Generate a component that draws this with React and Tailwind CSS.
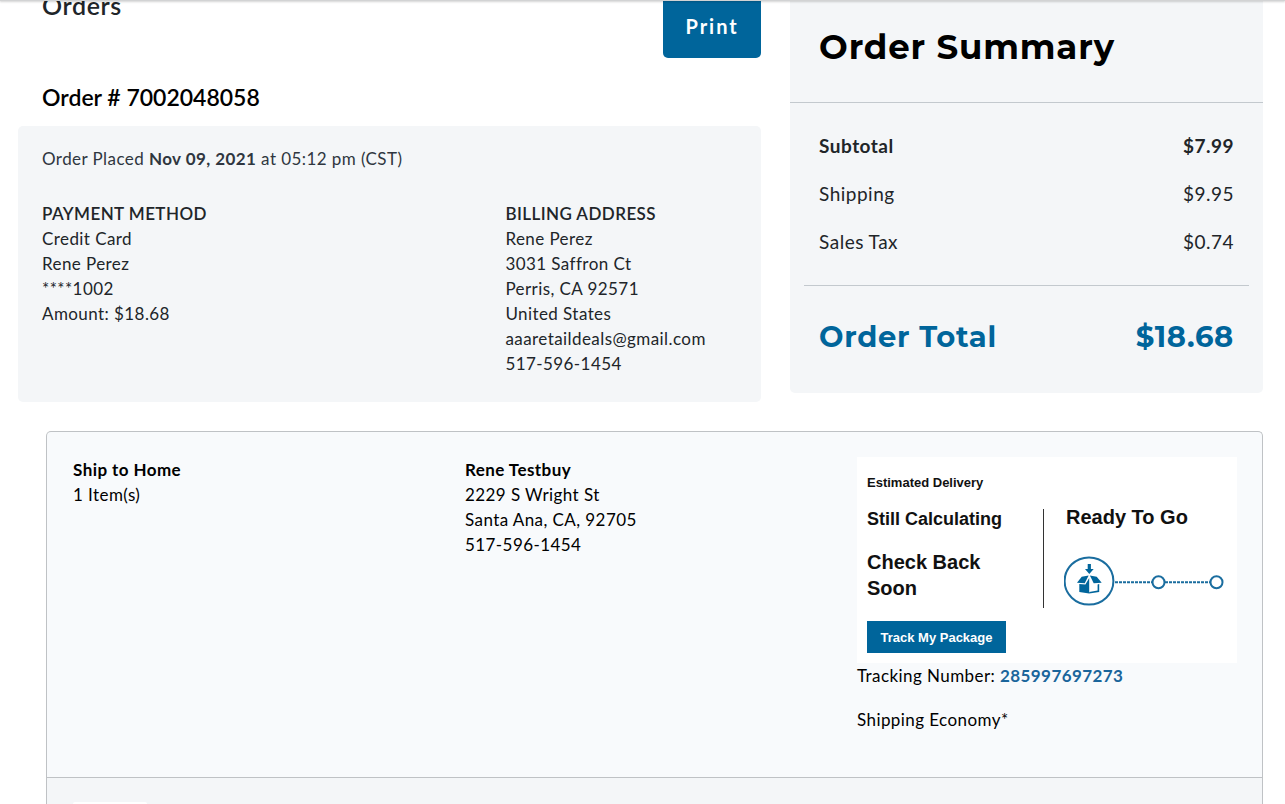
const paymentLines = ['Credit Card', 'Rene Perez', '****1002', 'Amount: $18.68'];

const billingLines = [
  'Rene Perez',
  '3031 Saffron Ct',
  'Perris, CA 92571',
  'United States',
  'aaaretaildeals@gmail.com',
  '517-596-1454',
];

const summaryRows = [
  { label: 'Subtotal', value: '$7.99', strong: true },
  { label: 'Shipping', value: '$9.95' },
  { label: 'Sales Tax', value: '$0.74' },
];

function DetailBlock({ title, lines, className = '' }) {
  return (
    <div className={className}>
      <h3 className="font-semibold">{title}</h3>
      {lines.map((line) => (
        <p key={line}>{line}</p>
      ))}
    </div>
  );
}

function OrderDetails() {
  return (
    <section>
      <div className="flex h-[58px] items-start justify-between pl-6">
        <h1 className="text-[25px]/[10px] font-semibold tracking-wide text-[#212529]">Orders</h1>
        <button
          type="button"
          className="h-full w-[98px] rounded-b-[5px] bg-[#00659b] pb-[6px] text-xl font-bold tracking-widest text-white"
        >
          Print
        </button>
      </div>

      <h2 className="mt-[23px] pl-6 text-[23px]/[32px] font-semibold text-black">Order # 7002048058</h2>

      <div className="mt-[13px] h-[276px] rounded-[5px] bg-[#f4f6f8] px-6 py-5 text-[17px]/[25px] tracking-wide text-[#212529]">
        <p className="text-[#2f3640]">
          Order Placed <b>Nov 09, 2021</b> at 05:12 pm (CST)
        </p>
        <div className="mt-[30px] grid grid-cols-3">
          <DetailBlock title="PAYMENT METHOD" lines={paymentLines} className="col-span-2" />
          <DetailBlock title="BILLING ADDRESS" lines={billingLines} />
        </div>
      </div>
    </section>
  );
}

function OrderSummary() {
  return (
    <section className="self-start rounded-b-[5px] bg-[#f4f6f8]">
      <div className="flex h-[103px] items-center border-b border-[#c3c9ce] px-[29px] pb-2">
        <h2 className="font-[Montserrat,Inter,sans-serif] text-[34px] font-bold tracking-wide text-black">
          Order Summary
        </h2>
      </div>
      <div className="mx-[14px] border-b border-[#c3c9ce] px-[15px] pt-[19px] pb-[19px]">
        {summaryRows.map((row) => (
          <div
            key={row.label}
            className={`flex h-12 items-center justify-between text-[19px] tracking-wide text-[#212529] ${row.strong ? 'font-bold' : ''}`}
          >
            <span>{row.label}</span>
            <span>{row.value}</span>
          </div>
        ))}
      </div>
      <div className="flex h-[107px] items-center justify-between px-[29px] pb-[6px] font-[Montserrat,Inter,sans-serif] text-[29px] font-bold tracking-wide text-[#00659b]">
        <span>Order Total</span>
        <span>$18.68</span>
      </div>
    </section>
  );
}

function ProgressTrack() {
  return (
    <svg width="160" height="50" viewBox="0 0 160 50" fill="none" stroke="#1a6d9f" aria-hidden="true">
      <ellipse cx="25" cy="25" rx="24.4" ry="23.6" strokeWidth="2" />
      <path d="M51 26.3H88M101 26.3H146" strokeWidth="2" strokeDasharray="3 1" />
      <circle cx="94.5" cy="26.3" r="6" strokeWidth="2" />
      <circle cx="152.5" cy="26.3" r="6" strokeWidth="2" />
      {/* arrow dropping into an open box */}
      <g fill="#00659b" stroke="none">
        <path d="M23.7 8h3.2v5h2.8L25.3 18 21 13h2.7z" />
        <path d="M17.7 20.7 24.6 19.6 20.8 27.3 13 26.7z" />
        <path d="M32.7 20.7 25.9 19.6 29.7 27.3 37.7 26.7z" />
        <path d="M15.3 28.1 21.4 28.5 25.2 22V37.6L15.3 36z" />
        <path d="M33.6 28.4 35.2 28.1V36L25.2 37.6V36l8.4-1.4z" />
      </g>
    </svg>
  );
}

function DeliveryCard() {
  return (
    <div className="flex h-[206px] bg-white pl-[10px] font-['Liberation_Sans',Arial,sans-serif] font-bold text-[#111]">
      <div className="w-[176px] pt-[17px]">
        <p className="text-[13px]/[18px]">Estimated Delivery</p>
        <p className="mt-4 text-lg/[22px]">Still Calculating</p>
        <p className="mt-[19px] w-[130px] text-xl/[26px]">Check Back Soon</p>
        <a
          href="#track"
          className="mt-5 flex h-8 w-[139px] items-center justify-center bg-[#00659b] text-[13px] text-white"
        >
          Track My Package
        </a>
      </div>
      <div className="mt-[52px] h-[99px] w-px bg-[#333]"></div>
      <div className="pt-12 pl-5">
        <p className="pl-[2px] text-xl/[24px]">Ready To Go</p>
        <div className="mt-[27px]">
          <ProgressTrack />
        </div>
      </div>
    </div>
  );
}

function Shipment() {
  return (
    <section className="mt-[29px] ml-7 rounded-t-[5px] border border-b-0 border-[#bfc2c5] bg-[#f8fafc]">
      <div className="grid min-h-[345px] grid-cols-3 gap-3 pt-[25px] pr-[25px] pl-[26px] text-[17px]/[25px] text-black">
        <div className="tracking-wide">
          <h3 className="font-bold">Ship to Home</h3>
          <p>1 Item(s)</p>
        </div>
        <div className="tracking-wide">
          <h3 className="font-bold">Rene Testbuy</h3>
          <p>2229 S Wright St</p>
          <p>Santa Ana, CA, 92705</p>
          <p>517-596-1454</p>
        </div>
        <div>
          <DeliveryCard />
          <p className="tracking-wide">
            Tracking Number:{' '}
            <a href="#tracking" className="font-bold text-[#1a659b]">
              285997697273
            </a>
          </p>
          <p className="mt-[19px] tracking-wide">Shipping Economy*</p>
        </div>
      </div>
      <div className="border-t border-[#bfc2c5] bg-[#f4f6f8] px-[26px] pt-6">
        <div className="h-[2px] w-[74px] rounded-t-[2px] bg-white"></div>
      </div>
    </section>
  );
}

export default function App() {
  return (
    <div className="overflow-hidden bg-white font-[Lato,sans-serif]">
      {/* lower edge of the sticky site header */}
      <div className="absolute inset-x-0 top-0 h-px bg-[#d2d3d4] shadow-[0_1px_2px_rgba(0,0,0,0.25)]"></div>
      <main className="pr-[22px] pl-[18px]">
        <div className="grid grid-cols-[11fr_7fr] gap-[29px]">
          <OrderDetails />
          <OrderSummary />
        </div>
        <Shipment />
      </main>
    </div>
  );
}
